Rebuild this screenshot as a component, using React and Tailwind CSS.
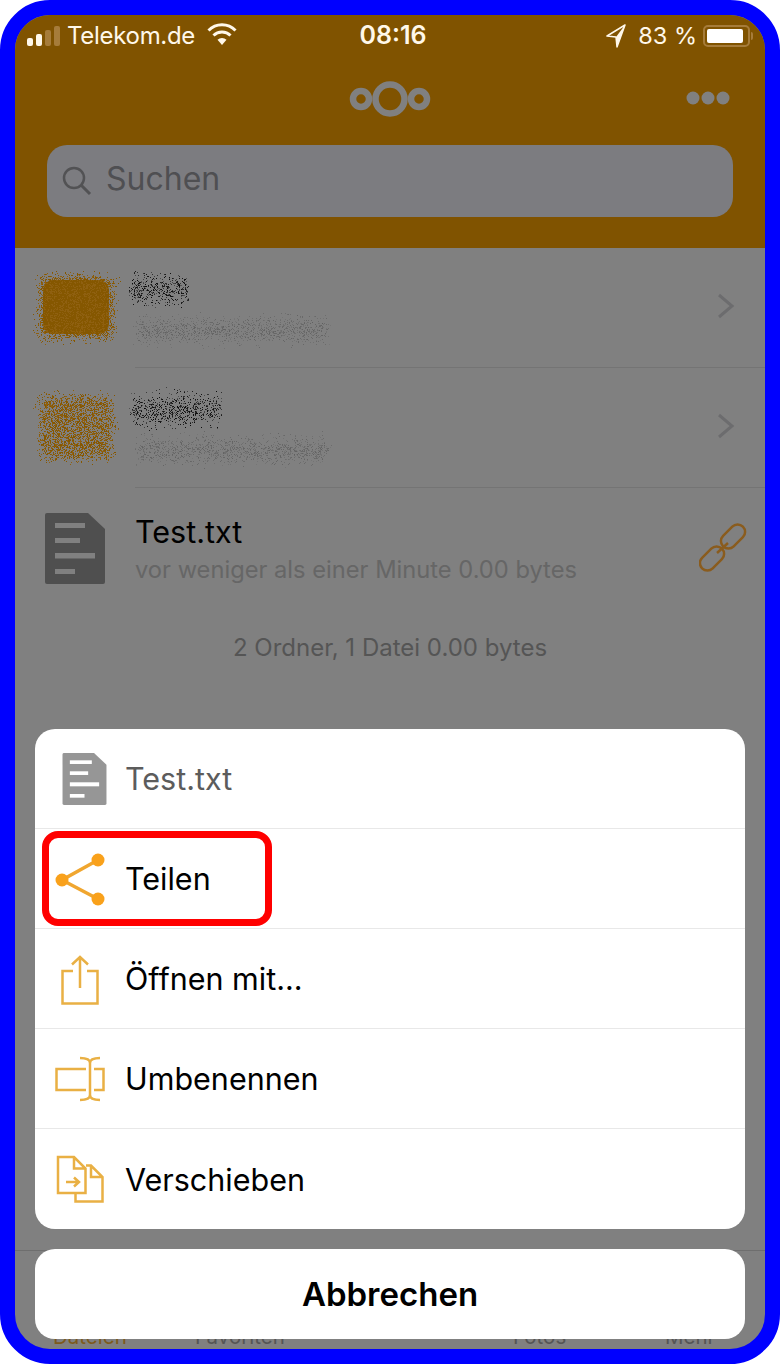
import React from "react";

function rng(seed) {
  let s = seed;
  return () => {
    s = (s * 1664525 + 1013904223) % 4294967296;
    return s / 4294967296;
  };
}

function gauss(r) {
  return (r() + r() + r() + r() - 2) / 1.1;
}

function Scribble({ w, h, n, color, seed, size = 1, opacity = 1 }) {
  const r = rng(seed);
  const dots = [];
  for (let i = 0; i < n; i++) {
    const x = Math.round(w * 0.04 + r() * w * 0.92 + gauss(r) * 5);
    const y = Math.round(h / 2 + gauss(r) * (h / 3));
    dots.push(<rect key={i} x={x} y={y} width={size} height={size} fill={color} opacity={opacity * (0.35 + r() * 0.65)} />);
  }
  return (
    <svg width={w} height={h} viewBox={`0 0 ${w} ${h}`} className="block shrink-0">
      {dots}
    </svg>
  );
}

function FolderBlob({ seed, density, solid }) {
  const r = rng(seed);
  const dots = [];
  for (let i = 0; i < density; i++) {
    const x = Math.round(10 + r() * 70 + gauss(r) * 7);
    const y = Math.round(12 + r() * 58 + gauss(r) * 7);
    dots.push(<rect key={i} x={x} y={y} width="1" height="1" fill={r() < 0.5 ? "#855700" : "#8f6010"} />);
  }
  return (
    <svg width="90" height="84" viewBox="0 0 90 84" className="block shrink-0">
      {solid && <rect x="12" y="14" width="66" height="54" rx="10" fill="#855700" />}
      {dots}
    </svg>
  );
}

function FileIcon({ className, fill, line }) {
  return (
    <svg viewBox="0 0 60 71" className={className}>
      <path d="M2 0H43L60 16V69a2 2 0 0 1-2 2H2a2 2 0 0 1-2-2V2a2 2 0 0 1 2-2Z" fill={fill} />
      <rect x="10" y="10" width="30" height="5" fill={line} />
      <rect x="10" y="25" width="25" height="5" fill={line} />
      <rect x="10" y="40" width="40" height="5.5" fill={line} />
      <rect x="10" y="56" width="20" height="5" fill={line} />
    </svg>
  );
}

function FolderRow({ seed, density, solid, titleW }) {
  return (
    <div className="flex h-[120px] shrink-0 items-center">
      <div className="ml-[16px] w-[104px] shrink-0">
        <FolderBlob seed={seed} density={density} solid={solid} />
      </div>
      <div className="flex h-full flex-1 items-center justify-between border-b border-[#747474] pr-[30px]">
        <div className="-ml-[6px] flex flex-col">
          <Scribble w={titleW} h={44} n={titleW * 8} color="#0a0a0a" seed={seed + 7} />
          <Scribble w={205} h={38} n={1300} color="#5e5e5e" seed={seed + 13} opacity={0.8} />
        </div>
        <svg width="18" height="26" viewBox="0 0 18 26" fill="none" className="mb-[4px] shrink-0">
          <path d="M2 2l13 11L2 24" stroke="#6c6c6e" strokeWidth="3" />
        </svg>
      </div>
    </div>
  );
}

function SheetRow({ icon, label, muted, last }) {
  return (
    <div className={`flex h-[100px] items-center ${last ? "" : "border-b border-[#e8e8e8]"}`}>
      <div className="flex w-[90px] shrink-0 justify-center">{icon}</div>
      <span className={`pt-[2px] text-[30.5px] leading-none ${muted ? "text-[#5c5c5c]" : "text-black"}`}>{label}</span>
    </div>
  );
}

const AMBER = "#e9b044";

export default function App() {
  return (
    <div className="h-[1364px] w-[780px] overflow-hidden bg-white font-['Inter','Liberation_Sans',sans-serif]">
      <div className="relative flex h-full w-full flex-col overflow-hidden rounded-[50px] border-[15px] border-[#0000ff] bg-[#808080]">
        <header className="flex h-[233px] shrink-0 flex-col bg-[#805300]">
          <div className="flex h-[41px] items-center px-[12px] text-[24px] leading-none text-[#fff8ea]">
            <div className="flex flex-1 items-center">
              <svg width="34" height="20" viewBox="0 0 34 20" className="shrink-0">
                <rect x="0" y="12" width="6" height="8" rx="2" fill="#fff8ea" />
                <rect x="9" y="8" width="6" height="12" rx="2" fill="#fff8ea" />
                <rect x="18" y="4" width="6" height="16" rx="2" fill="#a67c3a" />
                <rect x="27" y="0" width="6" height="20" rx="2" fill="#a67c3a" />
              </svg>
              <span className="ml-[6px] tracking-[-0.3px]">Telekom.de</span>
              <svg width="30" height="22" viewBox="0 0 30 22" fill="none" className="mb-[3px] ml-[12px]">
                <path d="M1.5 7.5a19 19 0 0 1 27 0" stroke="#fff8ea" strokeWidth="3" />
                <path d="M6.5 12.5a12 12 0 0 1 17 0" stroke="#fff8ea" strokeWidth="3" />
                <path d="M15 22l-4.5-5.2a6.5 6.5 0 0 1 9 0Z" fill="#fff8ea" />
              </svg>
            </div>
            <span className="ml-[6px] text-[25px] font-semibold">08:16</span>
            <div className="flex flex-1 items-center justify-end">
              <svg width="20" height="24" viewBox="0 0 20 24" fill="none" className="shrink-0">
                <path d="M19 1L1 12l9 1 1 10Z" stroke="#fff8ea" strokeWidth="1.5" strokeLinejoin="round" />
                <path d="M19 1L10 13l1 10Z" fill="#fff8ea" />
              </svg>
              <span className="ml-[12px] text-[23.5px]">83 %</span>
              <div className="ml-[6px] flex items-center">
                <div className="h-[22px] w-[47px] rounded-[5px] border-2 border-[#a67c3a] p-[2px]">
                  <div className="h-full w-[36px] rounded-[2px] bg-white" />
                </div>
                <div className="ml-[1px] h-[8px] w-[2px] rounded-r-sm bg-[#a67c3a]" />
              </div>
            </div>
          </div>
          <div className="relative flex h-[84px] items-center justify-center pt-[2px]">
            <svg width="82" height="38" viewBox="0 0 82 38" fill="none">
              <circle cx="41" cy="19" r="14.500" stroke="#808080" strokeWidth="6.500" />
              <circle cx="12" cy="19" r="8" stroke="#808080" strokeWidth="6.5" />
              <circle cx="70" cy="19" r="8" stroke="#808080" strokeWidth="6.5" />
            </svg>
            <svg width="46" height="16" viewBox="0 0 46 16" className="absolute right-[34px] top-[34px]">
              <circle cx="8" cy="8" r="6.500" fill="#808080" />
              <circle cx="23" cy="8" r="6.500" fill="#808080" />
              <circle cx="38" cy="8" r="6.500" fill="#808080" />
            </svg>
          </div>
          <div className="mx-[32px] mt-[5px] flex h-[72px] items-center rounded-[20px] bg-[#7c7c80] pl-[15px]">
            <svg width="30" height="30" viewBox="0 0 30 30" fill="none" className="shrink-0">
              <circle cx="12" cy="12" r="10" stroke="#525254" strokeWidth="2.5" />
              <path d="M19 19l9 9" stroke="#525254" strokeWidth="3" />
            </svg>
            <span className="mb-[4px] ml-[14px] text-[32px] leading-none text-[#4f4f52]">Suchen</span>
          </div>
        </header>

        <main className="flex flex-1 flex-col">
          <FolderRow seed={11} density={4200} solid titleW={60} />
          <FolderRow seed={29} density={3000} titleW={95} />
          <div className="flex h-[120px] items-center pr-[18px]">
            <div className="ml-[30px] w-[91px] shrink-0">
              <FileIcon className="h-[71px] w-[60px]" fill="#4f4f4f" line="#808080" />
            </div>
            <div className="-ml-[1px] flex flex-1 flex-col gap-[7px] pt-[3px]">
              <span className="text-[30.5px] leading-[34px] text-black">Test.txt</span>
              <span className="text-[23.7px] leading-[28px] text-[#666666]">vor weniger als einer Minute 0.00 bytes</span>
            </div>
            <svg width="48" height="50" viewBox="0 0 48 50" fill="none" stroke="#8a5c1e" strokeWidth="2.500" className="shrink-0">
              <rect x="20" y="6" width="28" height="15" rx="7.500" transform="rotate(-45 34 13.500)" />
              <rect x="-1" y="28" width="28" height="15" rx="7.500" transform="rotate(-45 13 35.500)" />
              <path d="M18 30l11-10" />
            </svg>
          </div>
          <div className="mt-[26px] text-center text-[24px] leading-[28px] text-[#555555]">2 Ordner, 1 Datei 0.00 bytes</div>

          <nav className="relative mt-auto h-[99px] border-t border-[#6e6e6e]">
            <span className="absolute left-[38px] top-[72px] text-[20.5px] leading-[28px] text-[#7d5a1c]">Dateien</span>
            <span className="absolute left-[180px] top-[72px] text-[20.5px] leading-[28px] text-[#555555]">Favoriten</span>
            <span className="absolute left-[498px] top-[72px] text-[20.5px] leading-[28px] text-[#555555]">Fotos</span>
            <span className="absolute left-[650px] top-[72px] text-[20.5px] leading-[28px] text-[#555555]">Mehr</span>
          </nav>
        </main>

        <div className="absolute left-[20px] top-[714px] flex w-[710px] flex-col gap-[20px]">
          <div className="flex h-[500px] flex-col rounded-[20px] bg-white">
            <SheetRow
              muted
              label="Test.txt"
              icon={<FileIcon className="ml-[9px] h-[52px] w-[45px]" fill="#969696" line="#ffffff" />}
            />
            <SheetRow
              label="Teilen"
              icon={
                <svg width="50" height="54" viewBox="0 0 50 54" fill="none">
                  <path d="M43 8L7 28l36 19" stroke="#f0a62f" strokeWidth="3.5" />
                  <circle cx="43" cy="8" r="6.500" fill="#f9a11b" />
                  <circle cx="7" cy="28" r="6.500" fill="#f9a11b" />
                  <circle cx="43" cy="47" r="6.500" fill="#f9a11b" />
                </svg>
              }
            />
            <SheetRow
              label="Öffnen mit..."
              icon={
                <svg width="38" height="50" viewBox="0 0 38 50" fill="none" stroke={AMBER} strokeWidth="2.500" className="mt-[2px]">
                  <path d="M12 16H1.500v32.500h35V16H26" />
                  <path d="M19 33V2M11 9.500L19 2l8 7.500" />
                </svg>
              }
            />
            <SheetRow
              label="Umbenennen"
              icon={
                <svg width="50" height="46" viewBox="0 0 50 46" fill="none" stroke={AMBER} strokeWidth="2.500">
                  <path d="M31 13H1.500v21H31M39 13h9.500v21H39" />
                  <path d="M35 7v32M25 2c6 0 10 1 10 5 0-4 4-5 10-5M25 44c6 0 10-1 10-5 0 4 4 5 10 5" />
                </svg>
              }
            />
            <SheetRow
              last
              label="Verschieben"
              icon={
                <svg width="48" height="48" viewBox="0 0 48 48" fill="none" stroke={AMBER} strokeWidth="2.500">
                  <path d="M29.500 38H2V2h16l11.500 11.500ZM18 2v11.500h11.500" />
                  <path d="M30 10.500h5l11.500 11.500v24.500h-27V38M35 10.500V22h11.500" />
                  <path d="M10 27h12M18 22.500l5 4.500-5 4.500" />
                </svg>
              }
            />
          </div>
          <div className="flex h-[90px] items-center justify-center rounded-[20px] bg-white text-[33px] font-semibold leading-none text-black">
            Abbrechen
          </div>
        </div>

        <div className="absolute left-[27px] top-[816px] h-[95px] w-[230px] rounded-[16px] border-[7px] border-[#ff0000]" />
      </div>
    </div>
  );
}
